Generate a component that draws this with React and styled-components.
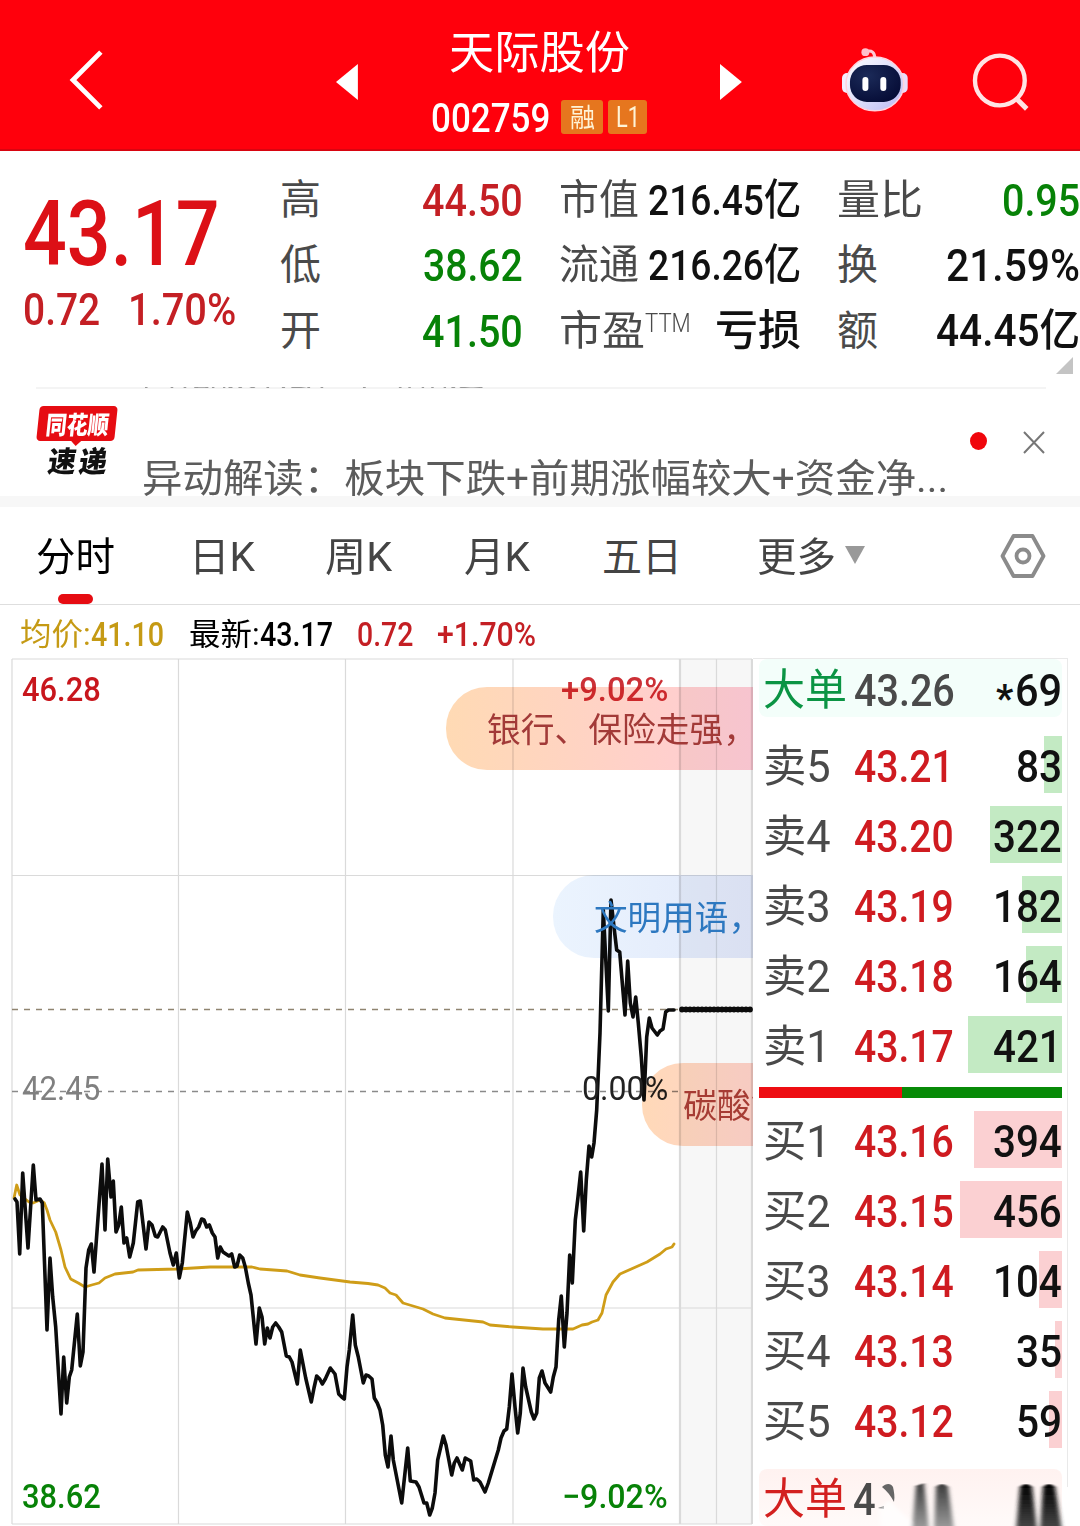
import React, { useLayoutEffect, useRef, useState } from "react";
import styled, { createGlobalStyle } from "styled-components";

const GlobalStyle = createGlobalStyle`
    * {
        box-sizing: border-box;
    }
    body {
        margin: 0;
        background: #fff;
        font-family: Roboto, "Noto Sans CJK SC", sans-serif;
        color: #111;
    }
`;

const RED = "#dc1016";
const GREEN = "#078207";
const GREY = "#4a4a4a";

/* ---------- text squeezed to a fixed advance ---------- */

const FitBox = styled.span`
    display: inline-block;
    flex: none;
    width: ${(p) => p.$width}px;
    font-size: ${(p) => p.$size}px;
    font-weight: ${(p) => p.$weight};
    line-height: 1;
    color: ${(p) => p.$color || "inherit"};
    white-space: nowrap;
`;

const FitInner = styled.span`
    display: inline-block;
    transform-origin: 0 50%;
`;

function Fit({ width, size, weight = 500, color, children }) {
    const ref = useRef(null);
    const [scale, setScale] = useState(1);

    useLayoutEffect(() => {
        setScale(width / ref.current.offsetWidth);
    }, [width, children]);

    return (
        <FitBox $width={width} $size={size} $weight={weight} $color={color}>
            <FitInner ref={ref} style={{ transform: `scaleX(${scale})` }}>
                {children}
            </FitInner>
        </FitBox>
    );
}

/* ---------- header ---------- */

const Screen = styled.div`
    width: 1080px;
    height: 1526px;
    overflow: hidden;
    background: #fff;
    display: flex;
    flex-direction: column;
`;

const Header = styled.header`
    height: 151px;
    flex: none;
    background: #ff000c;
    border-bottom: 2px solid #d80510;
    color: #fff;
    display: flex;
    align-items: center;
    padding: 0 50px 0 68px;
`;

const BackIcon = styled.svg`
    width: 38px;
    height: 64px;
    margin-top: 10px;
`;

const ArrowIcon = styled.svg`
    width: 22px;
    height: 36px;
    margin: 14px 0 0 ${(p) => p.$left}px;
`;

const Title = styled.div`
    width: 220px;
    margin-left: 72px;
    display: flex;
    flex-direction: column;
    align-items: center;
    gap: 26px;
    padding-top: 17px;
`;

const CodeRow = styled.div`
    display: flex;
    align-items: center;
    gap: 5px;
    height: 34px;
`;

const Tag = styled.span`
    width: ${(p) => p.$width}px;
    height: 34px;
    border-radius: 3px;
    background: #e6761e;
    color: #fff3d6;
    display: flex;
    align-items: center;
    justify-content: center;
    margin-left: ${(p) => p.$left || 0}px;
    margin-top: -3px;
    padding-top: 1px;
`;

const RobotIcon = styled.svg`
    width: 68px;
    height: 66px;
    margin: 10px 0 0 99px;
`;

const SearchIcon = styled.svg`
    width: 60px;
    height: 62px;
    margin: 15px 0 0 62px;
`;

/* ---------- quote summary ---------- */

const Quote = styled.section`
    height: 236px;
    flex: none;
    position: relative;
    display: flex;
    padding: 16.5px 0 0 23px;
`;

const Price = styled.div`
    width: 257px;
    display: flex;
    flex-direction: column;
    padding-top: 22px;
    color: ${RED};
`;

const Change = styled.div`
    display: flex;
    gap: 28px;
    margin-top: 7px;
    color: #c41f24;
`;

const StatColumn = styled.div`
    width: ${(p) => p.$width}px;
    margin-right: ${(p) => p.$gap || 0}px;
    display: flex;
    flex-direction: column;
`;

const Stat = styled.div`
    height: 65.5px;
    display: flex;
    align-items: center;
    justify-content: space-between;
`;

const StatLabel = styled.span`
    display: flex;
    align-items: flex-start;
`;

const Corner = styled.span`
    position: absolute;
    right: 7px;
    bottom: 13px;
    border-left: 17px solid transparent;
    border-bottom: 17px solid #c4c4c4;
`;

/* ---------- news strip ---------- */

const News = styled.section`
    height: 109px;
    flex: none;
    display: flex;
    padding: 0 34px 0 36px;
    overflow: hidden;
`;

const NewsLine = styled.div`
    flex: 1;
    display: flex;
    border-top: 2px solid #f4f4f4;
`;

const Logo = styled.div`
    width: 82px;
    padding-top: 17px;
    display: flex;
    flex-direction: column;
    align-items: center;
`;

const LogoBadge = styled.div`
    position: relative;
    width: 78px;
    height: 35px;
    border-radius: 4px;
    background: #e60c12;
    color: #fff;
    transform: skewX(-6deg);
    display: flex;
    align-items: center;
    justify-content: center;
    padding-top: 3px;
    &::after {
        content: "";
        position: absolute;
        left: 34px;
        top: 34px;
        border: 6px solid transparent;
        border-top: 6px solid #e60c12;
        border-bottom: 0;
    }
`;

const LogoWord = styled.div`
    display: flex;
    gap: 3px;
    transform: skewX(-8deg);
    margin-top: 7px;
`;

const Headlines = styled.div`
    width: 810px;
    height: 110px;
    margin: -3px 0 0 24px;
    overflow: hidden;
    display: flex;
    flex-direction: column;
    gap: 67px;
    color: #5c5c5c;
`;

const PastHeadline = styled.div`
    flex: none;
    height: 38px;
    margin-top: -31px;
    opacity: 0.6;
    clip-path: inset(0 0 5px);
`;

const Dot = styled.i`
    width: 17px;
    height: 18px;
    border-radius: 50%;
    background: #f0060c;
    margin: 43px 0 0 18px;
`;

const CloseIcon = styled.svg`
    width: 22px;
    height: 23px;
    margin: 42px 0 0 36px;
`;

/* ---------- tabs ---------- */

const Tabs = styled.nav`
    height: 109px;
    flex: none;
    border-top: 11px solid #f7f7f7;
    border-bottom: 1px solid #dedede;
    display: flex;
    padding: 0 34px 0 36px;
    color: #444;
`;

const Tab = styled.div`
    margin-left: ${(p) => p.$left || 0}px;
    height: 97px;
    padding-top: 31px;
    display: flex;
    flex-direction: column;
    align-items: center;
    color: ${(p) => (p.$active ? "#000" : "inherit")};
    &::after {
        content: "";
        display: ${(p) => (p.$active ? "block" : "none")};
        width: 35px;
        height: 10px;
        border-radius: 5px;
        background: #e60c12;
        margin-top: auto;
    }
`;

const MoreArrow = styled.i`
    border: 10px solid transparent;
    border-top: 18px solid #999;
    border-bottom: 0;
    margin: 39px 0 0 9px;
    align-self: flex-start;
`;

const HexIcon = styled.svg`
    width: 46px;
    height: 46px;
    margin: 26px 0 0 auto;
`;

const InfoRow = styled.div`
    height: 53px;
    flex: none;
    display: flex;
    align-items: center;
    padding: 5px 0 0 20px;
`;

const Gap = styled.span`
    width: ${(p) => p.$w}px;
`;

/* ---------- chart ---------- */

const Main = styled.main`
    flex: 1;
    display: flex;
    min-height: 0;
`;

const ChartArea = styled.div`
    position: relative;
    width: 753px;
    height: 868px;
    overflow: hidden;
    isolation: isolate;
`;

const ChartSvg = styled.svg`
    display: block;
`;

const AxisLabel = styled.div`
    position: absolute;
    left: ${(p) => p.$x}px;
    top: ${(p) => p.$y}px;
    line-height: 1;
    display: flex;
`;

const Bullet = styled.div`
    position: absolute;
    left: ${(p) => p.$x}px;
    top: ${(p) => p.$y}px;
    right: 0;
    height: 83px;
    color: ${(p) => p.$color};
    padding: 26px 0 0 41px;
    &::before {
        content: "";
        position: absolute;
        inset: 0;
        border-radius: 41px 0 0 41px;
        background: ${(p) => p.$bg};
        mix-blend-mode: multiply;
    }
`;

const BulletText = styled.span`
    position: relative;
    display: block;
    height: 40px;
    line-height: 1;
`;

/* ---------- order book ---------- */

const Book = styled.aside`
    width: 315px;
    height: 829px;
    padding: 0 5px 0 6px;
    border-top: 1px solid #e9e9e9;
    border-right: 1px solid #e9e9e9;
    display: flex;
    flex-direction: column;
`;

const BigOrder = styled.div`
    flex: none;
    height: ${(p) => p.$height}px;
    margin: ${(p) => p.$margin};
    border-radius: 8px;
    display: flex;
    align-items: center;
    padding: 4px 0 0 4px;
    background: ${(p) => p.$bg};
`;

const Star = styled.span`
    display: flex;
    padding-top: 18px;
`;

const BigVolume = styled.span`
    display: flex;
    align-items: center;
    margin-left: auto;
`;

const Level = styled.div`
    flex: none;
    height: 57px;
    margin-top: 13px;
    display: flex;
    align-items: center;
    padding-left: 4px;
`;

const LevelText = styled.span`
    width: ${(p) => p.$width}px;
    padding-top: 4px;
    display: flex;
`;

const Volume = styled.span`
    flex: 1;
    height: 57px;
    padding-top: 4px;
    display: flex;
    align-items: center;
    justify-content: flex-end;
    background: linear-gradient(${(p) => p.$tint}, ${(p) => p.$tint}) right / ${(p) => p.$bar}px 100% no-repeat;
`;

const Ratio = styled.div`
    flex: none;
    height: 11px;
    margin: 14px 0 0;
    background: linear-gradient(90deg, #ee0d12 0 143px, #078a07 143px);
`;

const Smear = styled.svg`
    width: 186px;
    height: 57px;
    flex: none;
    margin-top: -4px;
    overflow: visible;
`;

const priceLine =
    "15,1199 17,1202 19.7,1254 22.7,1173 28,1248 33.3,1165 36,1200 40,1199 42.3,1203 47,1330 50,1258 52.7,1297 55.7,1327 61,1414 63.7,1357 66.7,1403 69.3,1377 71.7,1370 77.3,1314 80.3,1366 83,1352 86,1268 88.7,1250 91.3,1244 94,1272 102,1164 105,1230 107.7,1159 111,1197 113.3,1181 116,1232 118.7,1225 121.3,1207 124,1243 126.7,1238 129.7,1257 133.3,1243 137.7,1202 140.3,1201 146,1249 149,1222 152,1225 155.3,1236 157.7,1237 162.7,1227 165.3,1230 170,1253 173.3,1265 176.3,1253 179.3,1278 182.3,1263 187.3,1212 190.3,1223 193,1237 195.7,1231 198.7,1227 201.7,1219 204,1220 206.7,1227 209.3,1225 212.3,1233 215,1237 217.7,1258 220.3,1247 223,1252 229,1256 231.7,1254 234.7,1267 237,1266 239.7,1255 242.7,1258 245.3,1267 248.3,1283 251,1295 256,1344 259.3,1308 262,1317 264.7,1344 267.3,1328 270,1338 272.7,1327 275.7,1323 278.7,1327 281.7,1332 286.3,1356 289.3,1357 292,1362 297.3,1384 300.3,1350 305.7,1378 311.3,1402 314,1388 316.7,1376 319.7,1379 322.3,1384 325.3,1379 330.3,1368 335,1374 338.7,1394 341.7,1397 344.3,1399 347,1367 349.3,1350 352.7,1315 355.3,1345 358.3,1357 363.3,1383 366,1375 368.7,1376 372,1379 374.3,1398 377.3,1403 380,1410 382.7,1425 385.3,1455 388,1467 391,1436 393.3,1460 401.7,1503 407.7,1448 410.3,1481 416,1482 419,1487 424,1503 426.7,1503 429.7,1515 432.3,1508 435,1493 437.7,1460 443.3,1436 446,1445 451.7,1475 454.3,1463 457,1458 462.3,1470 465.3,1458 470.7,1461 473.7,1480 476.7,1479 480,1482 485,1492 488.3,1483 498.3,1450 501,1438 504,1431 506.7,1429 509.3,1407 512,1374 515,1407 517.7,1433 520.3,1413 523,1368 525.7,1387 531.3,1412 534,1419 536.7,1413 539.3,1378 542,1371 545,1383 550.7,1392 553.3,1377 556,1367 558.7,1320 561.3,1296 564.3,1347 567,1313 569.7,1255 572.3,1283 575.3,1220 578,1197 580.7,1172 583.7,1231 586.3,1180 589,1146 591.7,1157 594,1143 596.7,1110 600,1033 603.3,910 608.3,1011 611,900 614,927 616.7,950 619.7,952 622.3,983 625,1015 627.7,961 630.3,1003 633,1017 635.7,997 638.3,1023 641.3,1057 644,1100 646.7,1037 649.3,1018 652,1028 657.3,1035 660,1031 663,1029 665.7,1012 668.3,1010 674,1010";

const averageLine =
    "14,1198 16.7,1185 20,1195 29,1202 33,1203 40,1200 44.3,1203 47,1210 50,1220 55.7,1232 61,1250 65,1267 70.7,1279 78.3,1283 85,1287 91.7,1285 99,1283 105,1278 115,1274 133,1272 138,1270 177,1269 210,1267 252,1267 260,1269 287,1271 300,1275 320,1278 350,1282 368,1283.5 378,1285 385,1288 390,1293 396,1295 403,1303 423,1309 433,1314 445,1318 483,1322 490,1325 513,1327 543,1329 573,1329 582,1325 588,1324 592,1322 598,1320 602,1313 606,1295 613,1282 620,1274 647,1262 660,1254 666,1249 672,1247 674,1244";

const sells = [
    ["5", "43.21", "83", 18],
    ["4", "43.20", "322", 72],
    ["3", "43.19", "182", 40],
    ["2", "43.18", "164", 36],
    ["1", "43.17", "421", 94],
];

const buys = [
    ["1", "43.16", "394", 88],
    ["2", "43.15", "456", 102],
    ["3", "43.14", "104", 23],
    ["4", "43.13", "35", 7],
    ["5", "43.12", "59", 13],
];

function Chart() {
    return (
        <ChartArea>
            <ChartSvg width="753" height="868" viewBox="0 658 753 868" fill="none">
                <rect x="680" y="659" width="72" height="865" fill="#f7f7f7" />
                <g stroke="#dadada" strokeWidth="1.2">
                    <path d="M12 659H752M12 875.5H752M12 1308H752M12 1524H752" />
                    <path d="M12 659V1524M178.5 659V1524M345.5 659V1524M513 659V1524M716.5 659V1524" />
                    <path d="M680 659V1524M752 659V1524" strokeWidth="2.2" />
                </g>
                <path d="M12 1009.5H680" stroke="#8f8470" strokeWidth="1.6" strokeDasharray="6 6" />
                <path d="M12 1091.5H680" stroke="#8a8a8a" strokeWidth="1.6" strokeDasharray="6 6" />
                <polyline points={averageLine} stroke="#cf9d18" strokeWidth="2.8" strokeLinejoin="round" strokeLinecap="round" />
                <polyline points={priceLine} stroke="#0c0c0c" strokeWidth="3.6" strokeLinejoin="round" strokeLinecap="round" />
                <path d="M680 1009.5H752" stroke="#0c0c0c" strokeWidth="4.4" />
                <path d="M682 1009.5H752" stroke="#0c0c0c" strokeWidth="5.8" strokeLinecap="round" strokeDasharray="0 4" />
            </ChartSvg>
            <AxisLabel $x={22} $y={14}>
                <Fit width={79} size={34} color="#c8161c">46.28</Fit>
            </AxisLabel>
            <AxisLabel $x={22} $y={413}>
                <Fit width={78} size={34} weight={400} color="#808080">42.45</Fit>
            </AxisLabel>
            <AxisLabel $x={22} $y={821}>
                <Fit width={79} size={34} color={GREEN}>38.62</Fit>
            </AxisLabel>
            <AxisLabel $x={561} $y={14}>
                <Fit width={107} size={34} color="#cc3036">+9.02%</Fit>
            </AxisLabel>
            <AxisLabel $x={582} $y={413}>
                <Fit width={86} size={34} weight={400} color="#222">0.00%</Fit>
            </AxisLabel>
            <AxisLabel $x={562} $y={821}>
                <Fit width={106} size={34} color={GREEN}>−9.02%</Fit>
            </AxisLabel>
            <Bullet $x={446} $y={29} $color="#a23a38" $bg="linear-gradient(90deg, #ffdab4, #ffcbd6)">
                <BulletText>
                    <Fit width={270} size={34} weight={400}>银行、保险走强，</Fit>
                </BulletText>
            </Bullet>
            <Bullet $x={553} $y={217} $color="#2d78c0" $bg="linear-gradient(90deg, #ebf4fe, #e1e8fa)">
                <BulletText>
                    <Fit width={168} size={34} weight={400}>文明用语，</Fit>
                </BulletText>
            </Bullet>
            <Bullet $x={642} $y={405} $color="#a63c34" $bg="linear-gradient(90deg, #ffd9b8, #ffd2c9)">
                <BulletText>
                    <Fit width={102} size={34} weight={400}>碳酸锂</Fit>
                </BulletText>
            </Bullet>
        </ChartArea>
    );
}

function Levels({ side, rows, tint }) {
    return rows.map(([n, price, vol, bar]) => (
        <Level key={side + n}>
            <LevelText $width={91}>
                <Fit width={68} size={44} weight={400} color={GREY}>{side + n}</Fit>
            </LevelText>
            <LevelText $width={100}>
                <Fit width={100} size={45} color="#cf1b20">{price}</Fit>
            </LevelText>
            <Volume $tint={tint} $bar={bar}>
                <Fit width={vol.length * 23} size={45}>{vol}</Fit>
            </Volume>
        </Level>
    ));
}

/* digits of the last row dissolving into vertical streaks */
function FadingDigits() {
    return (
        <Smear viewBox="877 1469 186 57">
            <defs>
                <linearGradient id="soft" x1="0" y1="0" x2="0" y2="1">
                    <stop offset="0" stopColor="#3c3c3c" />
                    <stop offset="1" stopColor="#a0a0a0" />
                </linearGradient>
                <linearGradient id="hard" x1="0" y1="0" x2="0" y2="1">
                    <stop offset="0" stopColor="#000" />
                    <stop offset="1" stopColor="#4a4a4a" />
                </linearGradient>
                <filter id="feather" filterUnits="userSpaceOnUse" x="870" y="1475" width="215" height="70">
                    <feGaussianBlur stdDeviation="2.2 0.6" />
                </filter>
            </defs>
            <path d="M883 1487c4-4 9-4 11 0 1 5 2 9 1 15-3-6-7-11-12-15z" fill="#666" />
            <path d="M879 1508l6-2v3z" fill="#666" />
            <g filter="url(#feather)">
                <path d="M890 1500 920 1530h-38l-2-20z" fill="#fff" opacity="0.7" />
                <path d="M917 1486l8-3 5 47h-17z" fill="url(#soft)" />
                <path d="M937 1487q6-6 12 0l6 43h-20z" fill="url(#soft)" />
                <path d="M1021 1487q6-6 12 0l5 43h-21z" fill="url(#hard)" />
                <path d="M1044 1487q6-6 12 0l7 43h-22z" fill="url(#hard)" />
            </g>
        </Smear>
    );
}

export default function App() {
    return (
        <Screen>
            <GlobalStyle />
            <Header>
                <BackIcon viewBox="0 0 38 64" fill="none" stroke="#fff" strokeWidth="4.8">
                    <path d="M33 4 5 32l28 28" />
                </BackIcon>
                <ArrowIcon $left={230} viewBox="0 0 22 36" fill="#fff">
                    <path d="M22 0v36L0 18z" />
                </ArrowIcon>
                <Title>
                    <Fit width={181} size={45} weight={400}>天际股份</Fit>
                    <CodeRow>
                        <Fit width={119} size={40}>002759</Fit>
                        <Tag $width={42} $left={6}>
                            <Fit width={25} size={26} weight={400}>融</Fit>
                        </Tag>
                        <Tag $width={39}>
                            <Fit width={24} size={29} weight={400}>L1</Fit>
                        </Tag>
                    </CodeRow>
                </Title>
                <ArrowIcon $left={71} viewBox="0 0 22 36" fill="#fff">
                    <path d="M0 0v36L22 18z" />
                </ArrowIcon>
                <RobotIcon viewBox="0 0 68 66">
                    <defs>
                        <linearGradient id="shell" x1="0" y1="0" x2="1" y2="1">
                            <stop offset="0" stopColor="#fff" />
                            <stop offset="0.5" stopColor="#dfe0fb" />
                            <stop offset="1" stopColor="#b9b6f2" />
                        </linearGradient>
                        <radialGradient id="visor" cx="0.35" cy="0.3" r="0.8">
                            <stop offset="0" stopColor="#1b2a58" />
                            <stop offset="1" stopColor="#050b35" />
                        </radialGradient>
                    </defs>
                    <path d="M25 4.5c6-2 9 1 9 7" fill="none" stroke="#ffc9d4" strokeWidth="3" />
                    <circle cx="24.5" cy="5" r="4" fill="#ffc0cc" />
                    <rect x="1" y="26" width="12" height="20" rx="5" fill="#f3eeff" />
                    <rect x="55" y="26" width="12" height="20" rx="5" fill="#e9dcfb" />
                    <ellipse cx="34" cy="37" rx="29" ry="27" fill="url(#shell)" stroke="#ffd3de" strokeWidth="1.5" />
                    <rect x="9" y="18" width="51" height="37" rx="17" fill="url(#visor)" />
                    <rect x="21.5" y="30" width="6" height="14" rx="3" fill="#fff" />
                    <rect x="39.5" y="30" width="6" height="14" rx="3" fill="#fff" />
                </RobotIcon>
                <SearchIcon viewBox="0 0 60 62" fill="none" stroke="#ffe4e4" strokeWidth="4.4">
                    <circle cx="30" cy="29.5" r="25" />
                    <path d="m46 47 11 11" strokeWidth="5" />
                </SearchIcon>
            </Header>

            <Quote>
                <Price>
                    <Fit width={197} size={90}>43.17</Fit>
                    <Change>
                        <Fit width={77} size={45}>0.72</Fit>
                        <Fit width={108} size={45}>1.70%</Fit>
                    </Change>
                </Price>
                <StatColumn $width={243} $gap={36}>
                    <Stat>
                        <StatLabel><Fit width={41} size={41} weight={400} color={GREY}>高</Fit></StatLabel>
                        <Fit width={101} size={45} color="#c41f24">44.50</Fit>
                    </Stat>
                    <Stat>
                        <StatLabel><Fit width={41} size={41} weight={400} color={GREY}>低</Fit></StatLabel>
                        <Fit width={100} size={45} color={GREEN}>38.62</Fit>
                    </Stat>
                    <Stat>
                        <StatLabel><Fit width={41} size={41} weight={400} color={GREY}>开</Fit></StatLabel>
                        <Fit width={101} size={45} color={GREEN}>41.50</Fit>
                    </Stat>
                </StatColumn>
                <StatColumn $width={242} $gap={36}>
                    <Stat>
                        <StatLabel><Fit width={80} size={41} weight={400} color={GREY}>市值</Fit></StatLabel>
                        <Fit width={153} size={43}>216.45亿</Fit>
                    </Stat>
                    <Stat>
                        <StatLabel><Fit width={80} size={41} weight={400} color={GREY}>流通</Fit></StatLabel>
                        <Fit width={153} size={43}>216.26亿</Fit>
                    </Stat>
                    <Stat>
                        <StatLabel>
                            <Fit width={86} size={41} weight={400} color={GREY}>市盈</Fit>
                            <Fit width={46} size={25} weight={300} color={GREY}>TTM</Fit>
                        </StatLabel>
                        <Fit width={86} size={42}>亏损</Fit>
                    </Stat>
                </StatColumn>
                <StatColumn $width={243}>
                    <Stat>
                        <StatLabel><Fit width={86} size={41} weight={400} color={GREY}>量比</Fit></StatLabel>
                        <Fit width={78} size={45} color={GREEN}>0.95</Fit>
                    </Stat>
                    <Stat>
                        <StatLabel><Fit width={41} size={41} weight={400} color={GREY}>换</Fit></StatLabel>
                        <Fit width={134} size={45}>21.59%</Fit>
                    </Stat>
                    <Stat>
                        <StatLabel><Fit width={41} size={41} weight={400} color={GREY}>额</Fit></StatLabel>
                        <Fit width={144} size={44}>44.45亿</Fit>
                    </Stat>
                </StatColumn>
                <Corner />
            </Quote>

            <News>
                <NewsLine>
                    <Logo>
                        <LogoBadge>
                            <Fit width={63} size={25} weight={900}>同花顺</Fit>
                        </LogoBadge>
                        <LogoWord>
                            <Fit width={28} size={29} weight={900} color="#111">速</Fit>
                            <Fit width={28} size={29} weight={900} color="#111">递</Fit>
                        </LogoWord>
                    </Logo>
                    <Headlines>
                        <PastHeadline>
                            <Fit width={342} size={38} weight={400}>同花顺算法，不断精进</Fit>
                        </PastHeadline>
                        <Fit width={806} size={39} weight={400}>异动解读：板块下跌+前期涨幅较大+资金净...</Fit>
                    </Headlines>
                    <Dot />
                    <CloseIcon viewBox="0 0 22 23" stroke="#777" strokeWidth="2">
                        <path d="M1 1l20 21M21 1 1 22" />
                    </CloseIcon>
                </NewsLine>
            </News>

            <Tabs>
                <Tab $active><Fit width={79} size={40} weight={400}>分时</Fit></Tab>
                <Tab $left={74}><Fit width={66} size={40} weight={400}>日K</Fit></Tab>
                <Tab $left={70}><Fit width={67} size={40} weight={400}>周K</Fit></Tab>
                <Tab $left={72}><Fit width={66} size={40} weight={400}>月K</Fit></Tab>
                <Tab $left={72}><Fit width={80} size={40} weight={400}>五日</Fit></Tab>
                <Tab $left={75}><Fit width={79} size={40} weight={400}>更多</Fit></Tab>
                <MoreArrow />
                <HexIcon viewBox="0 0 46 46" fill="none" stroke="#8b8b8b" strokeWidth="3.8">
                    <path d="M13.5 3h19L43.5 23l-11 20h-19L2.5 23z" strokeLinejoin="round" />
                    <circle cx="23" cy="23" r="6.5" />
                </HexIcon>
            </Tabs>

            <InfoRow>
                <Fit width={71} size={31} weight={400} color="#c59a14">均价:</Fit>
                <Fit width={73} size={33} color="#c59a14">41.10</Fit>
                <Gap $w={25} />
                <Fit width={71} size={31} weight={400} color="#000">最新:</Fit>
                <Fit width={73} size={33} color="#000">43.17</Fit>
                <Gap $w={24} />
                <Fit width={56} size={33} color="#c41f24">0.72</Fit>
                <Gap $w={24} />
                <Fit width={99} size={33} color="#c41f24">+1.70%</Fit>
            </InfoRow>

            <Main>
                <Chart />
                <Book>
                    <BigOrder $height={58} $margin="0 0 6px" $bg="#f3fefa">
                        <Fit width={84} size={43} weight={400} color="#0b9444">大单</Fit>
                        <Gap $w={7} />
                        <Fit width={101} size={45} color={GREY}>43.26</Fit>
                        <BigVolume>
                            <Star>
                                <Fit width={17} size={38} weight={700}>*</Fit>
                            </Star>
                            <Gap $w={2} />
                            <Fit width={47} size={45}>69</Fit>
                        </BigVolume>
                    </BigOrder>
                    <Levels side="卖" rows={sells} tint="#c3eac3" />
                    <Ratio />
                    <Levels side="买" rows={buys} tint="#fbd0d2" />
                    <BigOrder $height={57} $margin="21px 0 0" $bg="linear-gradient(180deg, #fff2f0, #fffaf9)">
                        <Fit width={84} size={43} weight={400} color="#d3201f">大单</Fit>
                        <Gap $w={7} />
                        <Fit width={23} size={45} color={GREY}>4</Fit>
                        <FadingDigits />
                    </BigOrder>
                </Book>
            </Main>
        </Screen>
    );
}
